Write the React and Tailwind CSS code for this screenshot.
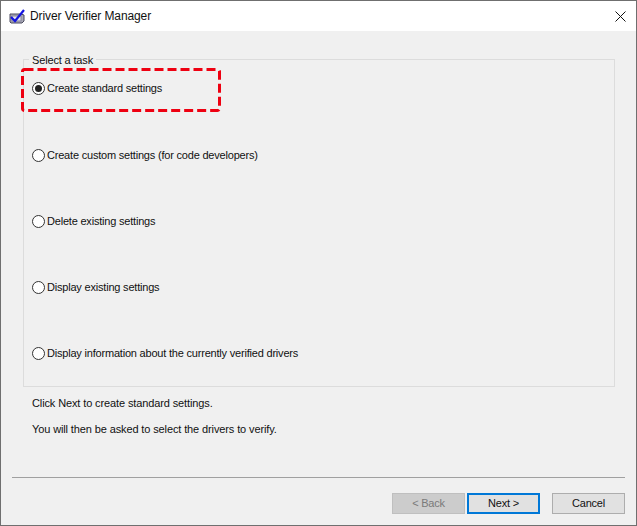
const tasks = [
  { label: "Create standard settings", checked: true, cls: "h-[67px]" },
  { label: "Create custom settings (for code developers)", cls: "h-[66px]" },
  { label: "Delete existing settings", cls: "h-[66px]" },
  { label: "Display existing settings", cls: "h-[66px]" },
  { label: "Display information about the currently verified drivers", cls: "h-[66px]" },
];

function AppIcon() {
  return (
    <svg width="17" height="15" viewBox="0 0 17 15" className="shrink-0">
      <path d="M1 5 H12 L15 6 V12 L13 14 H2 L1 13 Z" fill="#a9a9b6" stroke="#4b4b5e" />
      <rect x="3" y="7" width="9" height="5" fill="#e4e4ec" stroke="#85859a" />
      <path d="M2 8 L6 12 L15 1" fill="none" stroke="#1414e0" strokeWidth="2.2" />
    </svg>
  );
}

function Radio({ checked }) {
  return (
    <span className="w-[13px] h-[13px] rounded-full border border-[#333] bg-white flex items-center justify-center shrink-0">
      {checked && <span className="w-[7px] h-[7px] rounded-full bg-[#222]" />}
    </span>
  );
}

function WizardButton({ children, className }) {
  return (
    <button className={`h-[21px] w-[73px] flex items-center justify-center ${className}`}>
      {children}
    </button>
  );
}

export default function App() {
  return (
    <div className="relative w-[637px] h-[526px] flex flex-col bg-[#f0f0f0] border border-[#6f6f6f] text-[11px] tracking-[-0.2px] text-[#111] font-['Liberation_Sans',sans-serif] overflow-hidden">
      <div className="h-[30px] bg-white flex items-center pl-[8px] pr-[10px] shrink-0">
        <AppIcon />
        <span className="ml-[4px] text-[12px] tracking-[-0.1px]">Driver Verifier Manager</span>
        <svg width="11" height="11" viewBox="0 0 11 11" className="ml-auto">
          <path d="M0.5 0.5 L10.5 10.5 M10.5 0.5 L0.5 10.5" stroke="#111" strokeWidth="1" />
        </svg>
      </div>

      <div className="relative mt-[28px] ml-[22px] w-[592px] h-[328px] border border-[#dcdcdc] shrink-0 pl-[8px]">
        <span className="absolute left-[5px] -top-[7px] bg-[#f0f0f0] px-[3px] leading-[14px] tracking-[-0.15px]">Select a task</span>
        <div className="flex flex-col">
          {tasks.map((t) => (
            <div key={t.label} className={`flex items-start ${t.cls}`}>
              <div className="flex items-center gap-[2px] mt-[21px]">
                <Radio checked={t.checked} />
                <span className="leading-[14px]">{t.label}</span>
              </div>
            </div>
          ))}
        </div>
      </div>

      <div className="ml-[31px] mt-[9px] flex flex-col gap-[12px] leading-[14px] tracking-[-0.12px]">
        <p>Click Next to create standard settings.</p>
        <p>You will then be asked to select the drivers to verify.</p>
      </div>

      <div className="mt-[41px] mx-[11px] h-px bg-[#a0a0a0] shrink-0" />

      <div className="flex justify-end mt-[15px] pr-[11px]">
        <WizardButton className="bg-[#cccccc] border border-[#bfbfbf] text-[#7a7a7a]">&lt; Back</WizardButton>
        <WizardButton className="ml-[2px] bg-[#e1e1e1] border-2 border-[#0078d7]">Next &gt;</WizardButton>
        <WizardButton className="ml-[12px] bg-[#e1e1e1] border border-[#adadad]">Cancel</WizardButton>
      </div>

      <svg width="200" height="44" className="absolute left-[20px] top-[67px]">
        <rect x="1.5" y="1.5" width="197" height="41" rx="2" fill="none" stroke="#ee0011" strokeWidth="3" strokeDasharray="9 4" />
      </svg>
    </div>
  );
}
